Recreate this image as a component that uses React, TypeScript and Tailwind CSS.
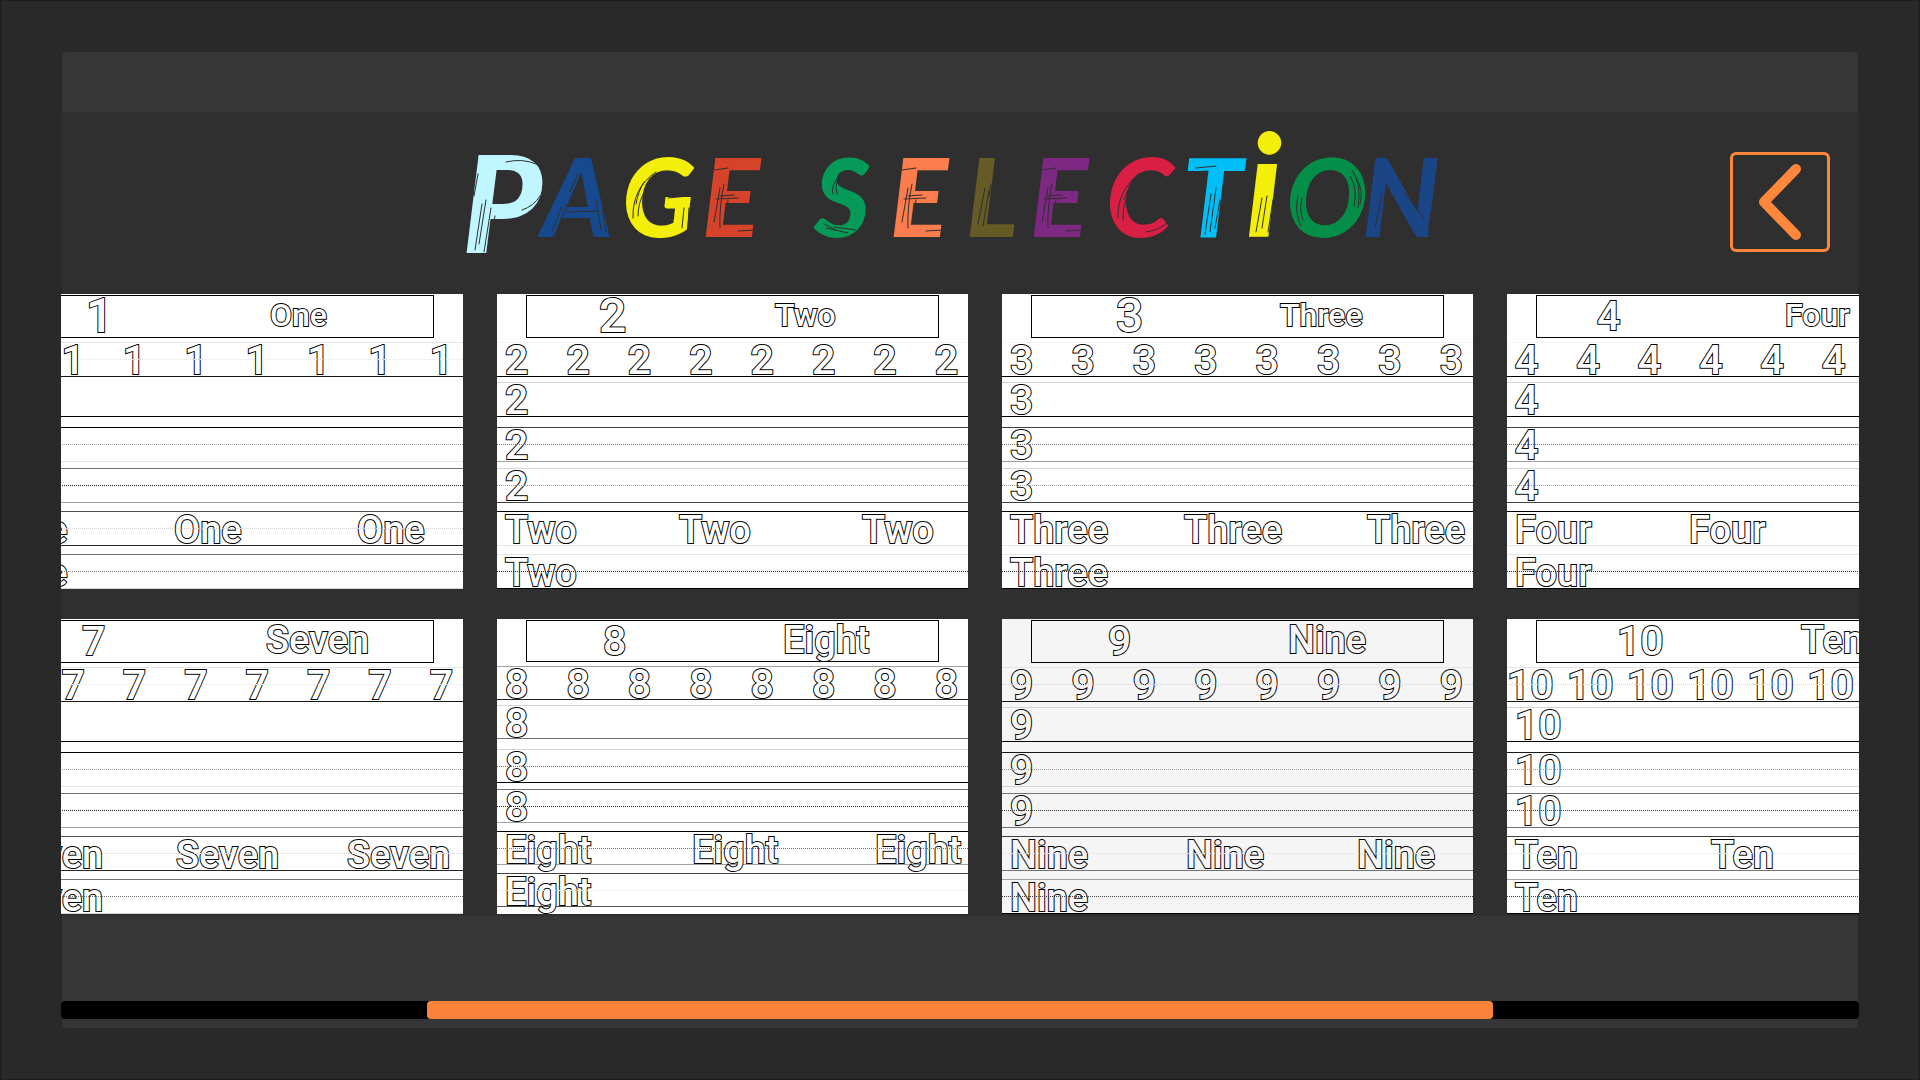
import React from 'react';
import clsx from 'clsx';

interface TitleLetter {
  char: string;
  className: string;
  // brush scratches, in the letter's own box
  scratches: string;
}

interface PageInfo {
  digit: string;
  word: string;
  digitPad: string;
  digitSize: string;
  wordSlot: string;
  wordSize: string;
  columns: string;
  wordCount: number;
  lines: string[][];
  compact?: boolean;
  tinted?: boolean;
}

const NORMAL = 'text-[108px] leading-[166px]';

const E_SCRATCHES = 'M18 76L12 110M22 72Q17 96 18 116M26 88L23 112M14 87L36 86M18 84L32 83M36 119L54 118M12 58L26 56';

const TITLE: TitleLetter[][] = [
  [
    { char: 'P', className: 'w-20 text-[136px] leading-[178px] text-[#bff6ff]', scratches: 'M20 92L13 138M24 88L17 132M29 96L22 140M33 104L28 134M44 50Q60 46 74 52M60 98Q72 94 78 84M16 62L12 84' },
    { char: 'A', className: `w-20 text-[#17498f] ${NORMAL}`, scratches: 'M20 94L10 120M25 92L15 118M54 88L59 118M60 94L64 120M24 100L56 99M36 62L28 80' },
    { char: 'G', className: `w-20 text-[#f3ee0a] ${NORMAL}`, scratches: 'M34 60Q10 76 11 106M40 62Q16 78 16 104M22 70Q16 80 14 92M46 86L66 84M62 96L60 116M67 96L66 114' },
    { char: 'E', className: `w-20 text-[#d5432a] ${NORMAL}`, scratches: E_SCRATCHES },
  ],
  [
    { char: 'S', className: `w-19 text-[#069a58] ${NORMAL}`, scratches: 'M34 59Q18 68 23 82M27 62Q16 74 19 82M12 116L34 121M20 115L42 118M10 112L22 118' },
    { char: 'E', className: `w-19 text-[#fb7d4e] ${NORMAL}`, scratches: E_SCRATCHES },
    { char: 'L', className: `w-16 text-[#665a26] ${NORMAL}`, scratches: 'M19 76L12 112M23 78L17 114M27 84L22 108M25 72L23 84' },
    { char: 'E', className: `w-19 text-[#7d2983] ${NORMAL}`, scratches: E_SCRATCHES },
    { char: 'C', className: `w-19 text-[#d91f43] ${NORMAL}`, scratches: 'M34 61Q11 78 12 106M40 62Q16 80 17 108M26 70Q20 80 18 88M40 120Q54 118 62 110' },
    { char: 'T', className: `w-16 text-[#00bff7] ${NORMAL}`, scratches: 'M29 82L23 122M34 76L28 120M38 88L33 116M14 56L34 54M12 60L26 59' },
    { char: 'i', className: 'w-10 text-[142px] leading-[138px] text-[#f3ee0a]', scratches: 'M16 86L10 120M21 84L16 116M27 88L22 120M31 92L28 112' },
    { char: 'O', className: `w-19 text-[#058e48] ${NORMAL}`, scratches: 'M12 84Q8 100 15 114M16 86Q13 98 17 108M66 58Q76 72 72 96M70 66Q78 78 74 92M64 64Q72 76 68 94' },
    { char: 'N', className: `w-24 text-[#1a4586] ${NORMAL}`, scratches: 'M20 82L13 116M25 80L19 116M72 84L66 118M78 80L71 114M42 80L62 106' },
  ],
];

const EDGE_LINES = [
  ['border-t-neutral-200', 'border-neutral-200', 'border-b-neutral-900'],
  ['border-t-transparent', 'border-transparent', 'border-b-black'],
  ['border-t-black', 'border-neutral-400', 'border-b-neutral-200'],
  ['border-t-neutral-500', 'border-neutral-800', 'border-b-neutral-400'],
  ['border-t-neutral-600', 'border-neutral-300', 'border-b-neutral-800'],
  ['border-t-neutral-500', 'border-neutral-500', 'border-b-neutral-300'],
];

const PLAIN_LINES = [
  ['border-t-neutral-100', 'border-transparent', 'border-b-black'],
  ['border-t-neutral-300', 'border-transparent', 'border-b-black'],
  ['border-t-neutral-700', 'border-neutral-500', 'border-b-neutral-400'],
  ['border-t-neutral-300', 'border-neutral-400', 'border-b-neutral-700'],
  ['border-t-black', 'border-transparent', 'border-b-neutral-200'],
  ['border-t-neutral-200', 'border-neutral-800', 'border-b-black'],
];

const EIGHT_LINES = [
  ['border-t-neutral-400', 'border-transparent', 'border-b-neutral-800'],
  ['border-t-neutral-300', 'border-transparent', 'border-b-neutral-500'],
  ['border-t-neutral-300', 'border-neutral-500', 'border-b-black'],
  ['border-t-neutral-500', 'border-neutral-800', 'border-b-neutral-400'],
  ['border-t-black', 'border-neutral-500', 'border-b-neutral-400'],
  ['border-t-neutral-700', 'border-neutral-200', 'border-b-neutral-600'],
];

const LATE_LINES = [
  ['border-t-neutral-200', 'border-neutral-300', 'border-b-neutral-900'],
  ['border-t-neutral-300', 'border-transparent', 'border-b-black'],
  ['border-t-neutral-900', 'border-neutral-400', 'border-b-neutral-300'],
  ['border-t-neutral-500', 'border-neutral-700', 'border-b-neutral-500'],
  ['border-t-neutral-700', 'border-neutral-200', 'border-b-neutral-500'],
  ['border-t-neutral-400', 'border-neutral-700', 'border-b-black'],
];

const ROW_GAPS = ['mt-1', 'mt-[5px]', 'mt-2.5', 'mt-1.5', 'mt-2', 'mt-2'];

const BIG = 'text-[41px]';
const TALL = 'text-[48px]';
const WORD = 'text-[38px]';
const SMALL_WORD = 'text-[32px]';

const PAGES: PageInfo[][] = [
  [
    { digit: '1', word: 'One', digitPad: 'pl-16', digitSize: TALL, wordSlot: 'w-62', wordSize: SMALL_WORD, columns: 'grid-cols-[174px_183px_1fr]', wordCount: 3, lines: EDGE_LINES },
    { digit: '2', word: 'Two', digitPad: 'pl-18', digitSize: TALL, wordSlot: 'w-62', wordSize: SMALL_WORD, columns: 'grid-cols-[174px_183px_1fr]', wordCount: 3, lines: PLAIN_LINES },
    { digit: '3', word: 'Three', digitPad: 'pl-21', digitSize: TALL, wordSlot: 'w-62', wordSize: SMALL_WORD, columns: 'grid-cols-[174px_183px_1fr]', wordCount: 3, lines: PLAIN_LINES },
    { digit: '4', word: 'Four', digitPad: 'pl-15', digitSize: BIG, wordSlot: 'w-62', wordSize: SMALL_WORD, columns: 'grid-cols-[174px_183px_1fr]', wordCount: 2, lines: PLAIN_LINES },
  ],
  [
    { digit: '7', word: 'Seven', digitPad: 'pl-15', digitSize: BIG, wordSlot: 'w-61', wordSize: WORD, columns: 'grid-cols-[176px_171px_1fr]', wordCount: 3, lines: EDGE_LINES },
    { digit: '8', word: 'Eight', digitPad: 'pl-19', digitSize: BIG, wordSlot: 'w-64', wordSize: WORD, columns: 'grid-cols-[187px_183px_1fr]', wordCount: 3, lines: EIGHT_LINES, compact: true },
    { digit: '9', word: 'Nine', digitPad: 'pl-19', digitSize: BIG, wordSlot: 'w-64', wordSize: WORD, columns: 'grid-cols-[176px_171px_1fr]', wordCount: 3, lines: LATE_LINES, tinted: true },
    { digit: '10', word: 'Ten', digitPad: 'pl-20', digitSize: BIG, wordSlot: 'w-66', wordSize: WORD, columns: 'grid-cols-[196px_171px_1fr]', wordCount: 2, lines: LATE_LINES },
  ],
];

// Hollow letters that children trace inside
const Outline: React.FC<{ children: React.ReactNode; tinted?: boolean; className: string }> = ({ children, tinted, className }) => (
  <span
    className={clsx(
      'block font-medium [paint-order:stroke_fill] [-webkit-text-stroke:2px_black]',
      tinted ? 'text-[#f5f5f5]' : 'text-white',
      className
    )}
  >
    {children}
  </span>
);

const PageCard: React.FC<{ page: PageInfo }> = ({ page }) => {
  const rowContent = (index: number) => {
    if (index === 0) {
      return (
        <span className={clsx('flex justify-between', page.digit === '10' ? 'pr-1' : 'pl-2 pr-2.5')}>
          {Array.from({ length: 8 }, (_, i) => (
            <Outline key={i} tinted={page.tinted} className={`leading-[34px] ${BIG}`}>{page.digit}</Outline>
          ))}
        </span>
      );
    }
    if (index < 4) {
      return <Outline tinted={page.tinted} className={`pl-2 leading-[34px] ${BIG}`}>{page.digit}</Outline>;
    }
    return (
      <span className={clsx('grid pl-2', page.columns)}>
        {Array.from({ length: index === 4 ? page.wordCount : 1 }, (_, i) => (
          <Outline key={i} tinted={page.tinted} className={`leading-[36px] ${WORD}`}>{page.word}</Outline>
        ))}
      </span>
    );
  };

  return (
    <button
      type="button"
      aria-label={`Page ${page.digit}`}
      className={clsx(
        'flex h-[295px] w-[471px] shrink-0 flex-col overflow-hidden pt-px text-left',
        page.tinted ? 'bg-[#f5f5f5]' : 'bg-white'
      )}
    >
      <span className={clsx('mx-auto flex w-[413px] items-start border border-black', page.compact ? 'h-[42px]' : 'h-[43px]')}>
        <span className={clsx('block', page.wordSlot, page.digitPad)}>
          <Outline tinted={page.tinted} className={`leading-[40px] ${page.digitSize}`}>{page.digit}</Outline>
        </span>
        <Outline tinted={page.tinted} className={`leading-[38px] ${page.wordSize}`}>{page.word}</Outline>
      </span>
      {page.lines.map(([top, middle, bottom], index) => (
        <span
          key={index}
          className={clsx('relative block w-full border-y', ROW_GAPS[index], top, bottom, page.compact ? 'h-[34px]' : 'h-[35px]')}
        >
          {rowContent(index)}
          <span className={clsx('absolute inset-x-0 top-4 border-t border-dotted', middle)} />
        </span>
      ))}
    </button>
  );
};

const Title = () => (
  <h1 aria-label="Page Selection" className="flex gap-8 font-['Lato',sans-serif] font-black italic">
    {TITLE.map((word, w) => (
      <span key={w} className="flex items-start">
        {word.map((letter, i) => (
          <span key={i} className={clsx('relative block', letter.className)}>
            {letter.char}
            <svg className="absolute top-0 left-0 h-44 w-24" viewBox="0 0 96 176" fill="none" stroke="#2f2f2f" strokeWidth="1" strokeLinecap="round">
              <path d={letter.scratches} />
            </svg>
          </span>
        ))}
      </span>
    ))}
  </h1>
);

export default function App() {
  return (
    <div className="flex min-h-screen flex-col border-2 border-[#202020] bg-[#292929] font-['Roboto',sans-serif]">
      <div className="flex flex-1 flex-col border border-[#313131] px-[59px] pt-[49px] pb-[49px]">
        <main className="flex flex-1 flex-col rounded-sm bg-[#363636]">
          <div className="h-[60px]" />

          <section className="bg-[#2f2f2f] pb-0.5">
            <header className="grid h-[182px] grid-cols-[1fr_auto_1fr] items-start">
              <div />
              <Title />
              <button
                type="button"
                aria-label="Back"
                className="mt-10 mr-7 flex size-[100px] items-center justify-center justify-self-end rounded-md border-3 border-[#ff873b]"
              >
                <svg width="94" height="94" viewBox="0 0 94 94" fill="none" stroke="#ff873b" strokeWidth="10" strokeLinecap="round" strokeLinejoin="round">
                  <path d="M63 14L31 47L63 80" />
                </svg>
              </button>
            </header>

            <div className="-mx-px flex flex-col gap-[30px] overflow-hidden">
              {PAGES.map((row, i) => (
                <div key={i} className="-ml-[69px] flex gap-[34px]">
                  {row.map(page => (
                    <PageCard key={page.digit} page={page} />
                  ))}
                </div>
              ))}
            </div>
          </section>

          <footer className="-mx-px mt-auto pb-[9px]">
            <div
              role="scrollbar"
              aria-label="Scroll pages"
              aria-controls="root"
              aria-valuenow={50}
              className="h-[18px] rounded bg-black"
            >
              <div className="mx-auto h-full w-[59.3%] rounded bg-[#fb8339]" />
            </div>
          </footer>
        </main>
      </div>
    </div>
  );
}
